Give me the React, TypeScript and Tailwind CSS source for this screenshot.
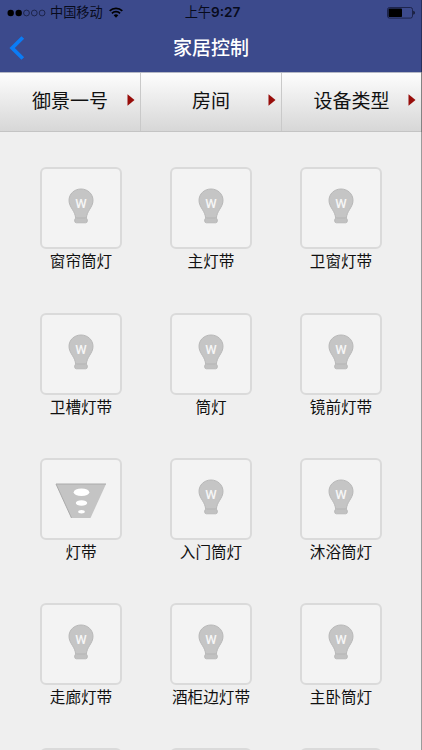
import React from 'react';

interface Device {
  name: string;
  type: 'bulb' | 'strip';
}

const TABS = ['御景一号', '房间', '设备类型'];

const DEVICES: Device[] = [
  { name: '窗帘筒灯', type: 'bulb' },
  { name: '主灯带', type: 'bulb' },
  { name: '卫窗灯带', type: 'bulb' },
  { name: '卫槽灯带', type: 'bulb' },
  { name: '筒灯', type: 'bulb' },
  { name: '镜前灯带', type: 'bulb' },
  { name: '灯带', type: 'strip' },
  { name: '入门筒灯', type: 'bulb' },
  { name: '沐浴筒灯', type: 'bulb' },
  { name: '走廊灯带', type: 'bulb' },
  { name: '酒柜边灯带', type: 'bulb' },
  { name: '主卧筒灯', type: 'bulb' },
];

const BulbIcon: React.FC = () => (
  <svg className="mb-1" width="26" height="36" viewBox="0 0 26 36">
    <path
      d="M13 1C6.200 1 1 6 1 12.400c0 3.600 1.700 6.300 3.400 9.100 1.800 2.800 2.800 5.200 3.300 8.500h10.600c.5-3.300 1.500-5.700 3.300-8.500 1.700-2.800 3.400-5.500 3.400-9.100C25 6 19.800 1 13 1z"
      fill="#c5c5c5"
      stroke="#b8b8b8"
      strokeWidth="1"
    />
    <rect x="6.700" y="30.200" width="12.600" height="4.600" rx="1.800" fill="#c1c1c1" stroke="#b5b5b5" strokeWidth="0.900" />
    <text x="13" y="19.500" textAnchor="middle" fontSize="13" fontWeight="500" fill="#f6f6f6" fontFamily="Roboto, sans-serif">
      W
    </text>
  </svg>
);

const StripIcon: React.FC = () => (
  <svg className="mt-1" width="52" height="36" viewBox="0 0 52 36">
    <path d="M1 1h50L35.500 35H16.500z" fill="#c4c4c4" />
    <path d="M16.500 35L1 1h50" fill="none" stroke="#aaaaaa" strokeWidth="1" />
    <ellipse cx="26.500" cy="9.200" rx="7.800" ry="3.800" fill="#fff" />
    <ellipse cx="26.500" cy="20" rx="5.700" ry="2.800" fill="#fff" />
    <ellipse cx="26.500" cy="28.700" rx="3.300" ry="1.700" fill="#fff" />
  </svg>
);

const StatusBar: React.FC = () => (
  <div className="grid h-6 grid-cols-3 items-center pr-[7px] pl-[7px] text-[13.200px] leading-6 text-[#080b1c]">
    <div className="flex items-center">
      <svg width="39" height="8" viewBox="0 0 39 8">
        <circle cx="3.700" cy="4" r="3.200" fill="#000" />
        <circle cx="11.700" cy="4" r="3.200" fill="#000" />
        <circle cx="19.500" cy="4" r="2.900" fill="none" stroke="#111630" strokeWidth="0.700" />
        <circle cx="27.300" cy="4" r="2.900" fill="none" stroke="#111630" strokeWidth="0.700" />
        <circle cx="35.100" cy="4" r="2.900" fill="none" stroke="#111630" strokeWidth="0.700" />
      </svg>
      <span className="ml-1 whitespace-nowrap">中国移动</span>
      <svg className="mb-px ml-[6px] shrink-0" width="14" height="11" viewBox="0 0 14 11" fill="none" stroke="#000" strokeWidth="1.700">
        <path d="M.7 3.900a8.900 8.900 0 0 1 12.600 0M2.900 6.400a5.800 5.800 0 0 1 8.200 0" />
        <path d="M7 10.700L4.700 8.300a3.300 3.300 0 0 1 4.600 0z" fill="#000" stroke="none" />
      </svg>
    </div>
    <div className="pl-[3px] text-center whitespace-nowrap">
      上午<span className="font-[Inter] text-[13.600px] font-semibold">9:27</span>
    </div>
    <div className="flex justify-end">
      <svg width="28" height="12" viewBox="0 0 28 12">
        <rect x="0.500" y="0.500" width="25" height="10.600" rx="2" fill="none" stroke="#151b3c" strokeWidth="0.800" />
        <rect x="1.500" y="1.600" width="13.500" height="8.400" rx="0.800" fill="#000" />
        <path d="M26.500 3.800c1.500.6 1.500 3.400 0 4z" fill="#000" />
      </svg>
    </div>
  </div>
);

const DeviceTile: React.FC<{ device?: Device }> = ({ device }) => (
  <div className="flex flex-col items-center">
    <div className="flex h-[82px] w-[82px] shrink-0 items-center justify-center rounded-[6px] border-2 border-[#dadada] bg-[#f3f3f3]">
      {device && (device.type === 'bulb' ? <BulbIcon /> : <StripIcon />)}
    </div>
    {device && <span className="text-[15.600px] leading-[26px] whitespace-nowrap text-[#111]">{device.name}</span>}
  </div>
);

export default function App() {
  return (
    <div className="relative flex h-[750px] w-[422px] flex-col overflow-hidden bg-[#efefef] font-['Liberation_Sans','Noto_Sans_CJK_SC',sans-serif]">
      <header className="h-[72px] shrink-0 bg-[#3c4a8c]">
        <StatusBar />
        <div className="grid h-12 grid-cols-[60px_1fr_60px] items-center">
          <svg className="ml-[9px]" width="16" height="24" viewBox="0 0 16 24" fill="none" stroke="#0b7cf5" strokeWidth="3.800">
            <path d="M13.800 1.500L3.200 12l10.600 10.500" />
          </svg>
          <h1 className="pt-0.5 text-center text-[19px] leading-7 font-medium text-white">家居控制</h1>
        </div>
      </header>

      <nav className="grid h-[60px] shrink-0 grid-cols-[141px_141px_140px] border-t border-b border-t-[#b5b8c5] border-b-[#c4c4c4] bg-linear-to-b from-[#fdfdfd] to-[#d7d7d7]">
        {TABS.map((tab) => (
          <button key={tab} className="relative border-r border-[#c9c9c9] pb-px text-[19px] leading-7 text-[#111]">
            {tab}
            <svg className="absolute top-[21px] right-[5px]" width="8" height="12" viewBox="0 0 8 12">
              <path d="M.5.3L7.500 6 .5 11.700z" fill="#980d0a" />
            </svg>
          </button>
        ))}
      </nav>

      <main className="grid auto-rows-[145.200px] grid-cols-[82px_82px_82px] justify-center gap-x-12 pt-[35.400px]">
        {DEVICES.map((device) => (
          <DeviceTile key={device.name} device={device} />
        ))}
        {/* next row, only its top edge is on screen */}
        <DeviceTile />
        <DeviceTile />
        <DeviceTile />
      </main>

      {/* right screen edge */}
      <div className="absolute top-0 right-0 h-full w-px bg-black/35" />
    </div>
  );
}
